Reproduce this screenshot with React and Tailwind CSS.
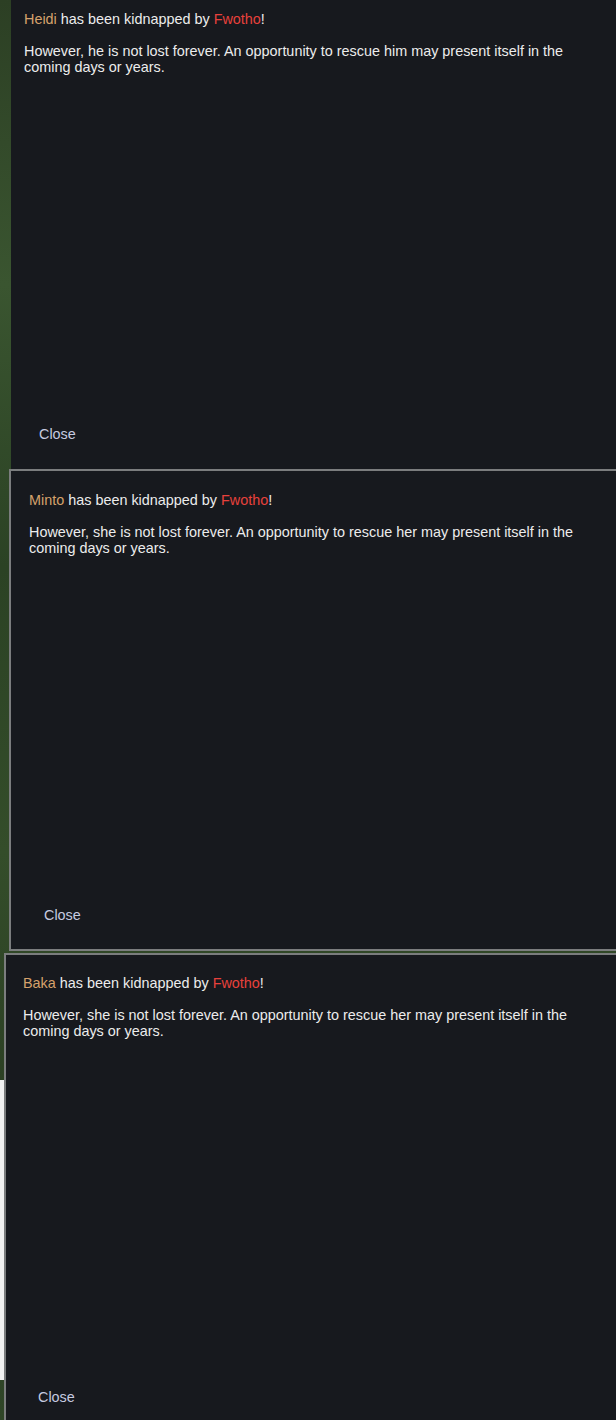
export default function App() {
  const font = { fontFamily: '"Liberation Sans", Arial, sans-serif' };
  return (
    <div
      className="relative w-[616px] h-[1420px] overflow-hidden bg-[linear-gradient(180deg,#2c3f24_0%,#3a5530_20%,#2b4224_40%,#344d2a_60%,#2a3d22_80%,#2f4527_100%)] text-[14.4px] leading-4 text-[#ececec]"
      style={font}
    >
      {/* Dialog 1 */}
      <div className="ml-[11px] h-[469px] bg-[#17191e] flex flex-col pl-[13px] pt-[11px] pb-[27px]">
        <p>
          <span className="text-[#d6a26c]">Heidi</span> has been kidnapped by{" "}
          <span className="text-[#e8413c]">Fwotho</span>!
        </p>
        <p className="mt-[16px] pr-[30px]">
          However, he is not lost forever. An opportunity to rescue him may present itself in the coming days or years.
        </p>
        <div className="mt-auto pl-[15px] text-[#c6cbe0]">Close</div>
      </div>

      {/* Dialog 2 */}
      <div className="ml-[9px] h-[482px] border-2 border-r-0 border-[#7b7d7e] bg-[#17191e] flex flex-col pl-[18px] pt-[21px] pb-[26px]">
        <p>
          <span className="text-[#d6a26c]">Minto</span> has been kidnapped by{" "}
          <span className="text-[#e8413c]">Fwotho</span>!
        </p>
        <p className="mt-[16px] pr-[30px]">
          However, she is not lost forever. An opportunity to rescue her may present itself in the coming days or years.
        </p>
        <div className="mt-auto pl-[15px] text-[#c6cbe0]">Close</div>
      </div>

      <div className="h-[2px]" />

      {/* Dialog 3 */}
      <div className="relative">
        <div className="absolute left-0 top-[127px] w-[4px] h-[300px] bg-[#f2f2f2]" />
        <div className="ml-[4px] h-[470px] border-2 border-r-0 border-b-0 border-[#7b7d7e] bg-[#17191e] flex flex-col pl-[17px] pt-[20px]">
          <p>
            <span className="text-[#d6a26c]">Baka</span> has been kidnapped by{" "}
            <span className="text-[#e8413c]">Fwotho</span>!
          </p>
          <p className="mt-[16px] pr-[30px]">
            However, she is not lost forever. An opportunity to rescue her may present itself in the coming days or years.
          </p>
          <div className="mt-[350px] pl-[15px] text-[#c6cbe0]">Close</div>
        </div>
      </div>
    </div>
  );
}
